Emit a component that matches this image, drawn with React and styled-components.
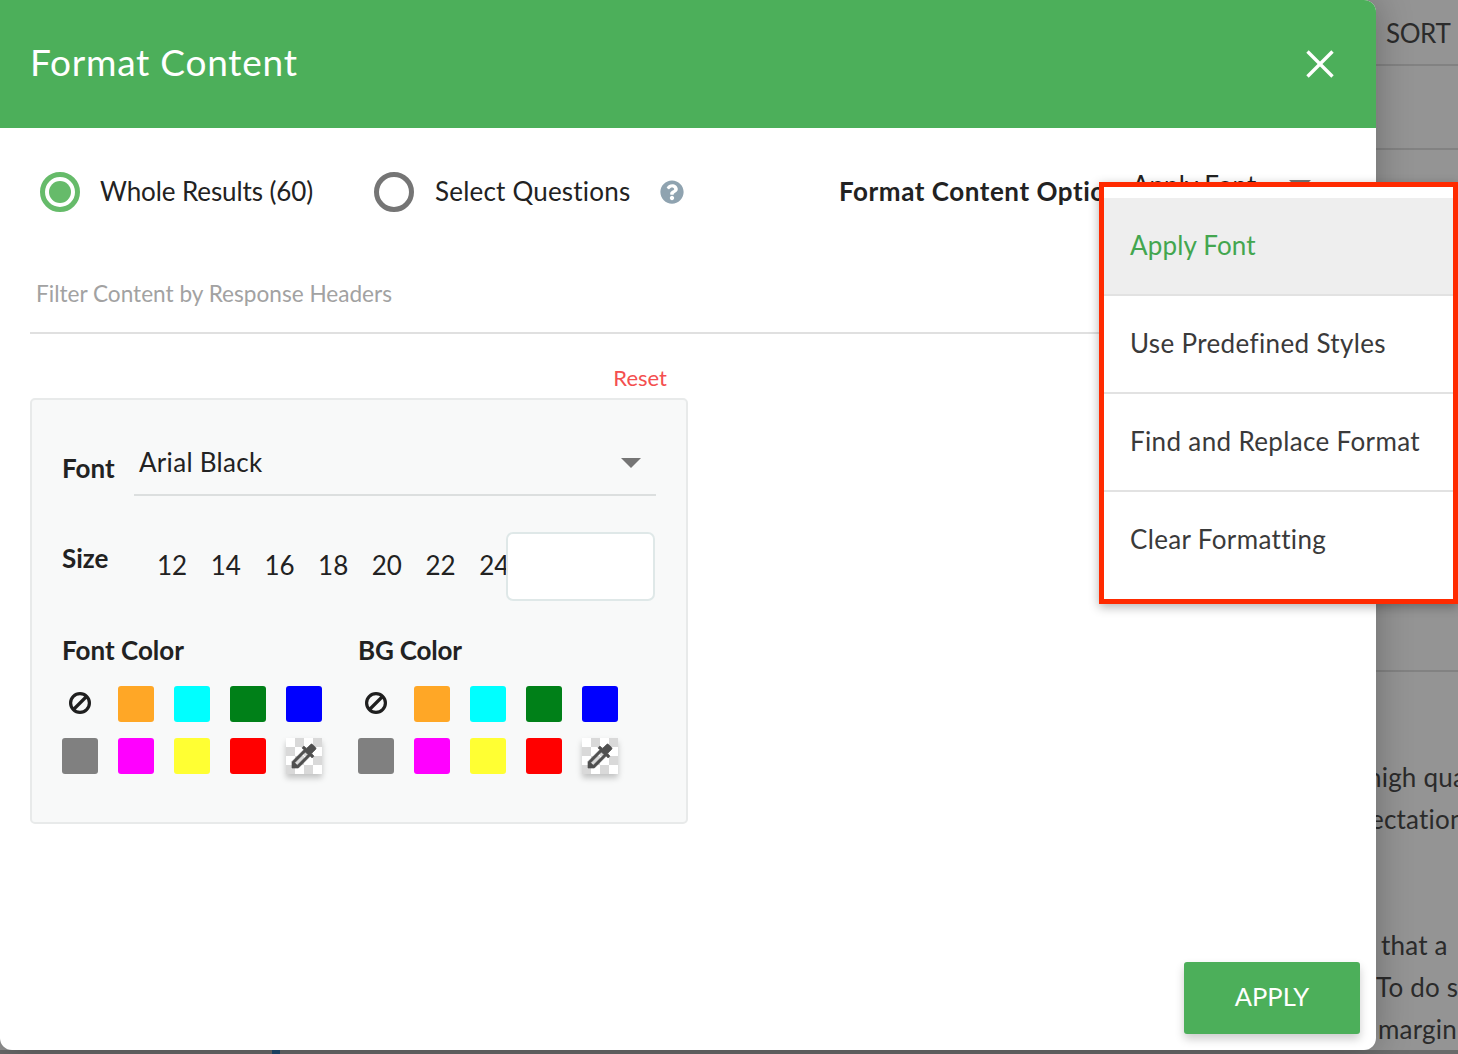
import React from "react";
import styled, { createGlobalStyle } from "styled-components";
import { FaQuestionCircle } from "react-icons/fa";

const Global = createGlobalStyle`
  html, body { margin: 0; padding: 0; width: 1458px; height: 1054px; overflow: hidden; background: #6a6a6a; }
  * { box-sizing: border-box; }
  body { font-family: Lato, "Noto Sans", sans-serif; color: #222; font-variant-ligatures: none; }
`;

const Stage = styled.div`
  position: relative;
  width: 1458px;
  height: 1054px;
  overflow: hidden;
`;
const Backdrop = styled.div`
  height: 1050px;
  background: #949494;
  padding-left: 1376px;
  display: flex;
  flex-direction: column;
  color: #2b2b2b;
  font-size: 26px;
  letter-spacing: 0.2px;
`;
const BottomStrip = styled.div`
  height: 4px;
  background: #6a6a6a;
  display: flex;
  padding-left: 272px;
`;
const BlueTick = styled.div`
  width: 8px;
  background: #1d4a6e;
`;
const BgHead = styled.div`
  height: 66px;
  padding: 17px 0 0 10px;
  border-bottom: 2px solid #828282;
  line-height: 32px;
  letter-spacing: -0.4px;
  white-space: nowrap;
`;
const BgRow = styled.div`
  height: ${p => p.$h}px;
  border-bottom: 2px solid #828282;
`;
const BgParagraph = styled.div`
  margin-top: ${p => p.$top}px;
  display: flex;
  flex-direction: column;
`;
const BgLine = styled.div`
  height: 42px;
  line-height: 42px;
  white-space: nowrap;
  margin-left: ${p => p.$indent}px;
`;

const Modal = styled.div`
  position: absolute;
  left: 0;
  top: 0;
  width: 1376px;
  height: 1050px;
  background: #fff;
  border-radius: 0 12px 12px 12px;
  box-shadow: 0 0 36px rgba(0, 0, 0, 0.28);
  display: flex;
  flex-direction: column;
  overflow: hidden;
`;
const Header = styled.header`
  height: 128px;
  flex: none;
  background: #4caf5a;
  display: flex;
  align-items: center;
  justify-content: space-between;
  padding: 0 42px 0 30px;
`;
const Title = styled.h1`
  margin: 0 0 6px;
  font-size: 37px;
  font-weight: 400;
  letter-spacing: 0.75px;
  color: #fff;
`;
const CloseIcon = styled.svg`
  width: 28px;
  height: 28px;
  display: block;
`;
const Body = styled.div`
  flex: 1;
  display: flex;
  flex-direction: column;
  padding: 44px 16px 16px 30px;
  min-height: 0;
`;
const OptionsRow = styled.div`
  height: 40px;
  display: flex;
  align-items: center;
  padding-left: 10px;
`;
const Radio = styled.span`
  width: 40px;
  height: 40px;
  flex: none;
  border-radius: 50%;
  border: 5px solid ${p => (p.$on ? "#66bb6a" : "#757575")};
  display: flex;
  align-items: center;
  justify-content: center;
  &::after {
    content: "";
    width: 22px;
    height: 22px;
    border-radius: 50%;
    background: ${p => (p.$on ? "#66bb6a" : "transparent")};
  }
`;
const RadioLabel = styled.span`
  font-size: 26px;
  margin: 0 0 2px ${p => p.$gap || 20}px;
  width: ${p => p.$w}px;
  flex: none;
  white-space: nowrap;
  letter-spacing: ${p => p.$track || 0}px;
`;
const Help = styled(FaQuestionCircle)`
  width: 24px;
  height: 24px;
  color: #8fa3b0;
  flex: none;
`;
const OptionTitle = styled.span`
  margin: 0 0 2px 155px;
  width: 293px;
  flex: none;
  font-size: 26px;
  font-weight: 700;
  letter-spacing: 0.55px;
  white-space: nowrap;
`;
const OptionValue = styled.span`
  width: 157px;
  flex: none;
  font-size: 26px;
  white-space: nowrap;
  margin-bottom: 14px;
`;
const MiniCaret = styled.span`
  width: 0;
  height: 0;
  margin-bottom: 13px;
  border-left: 11px solid transparent;
  border-right: 11px solid transparent;
  border-top: 11px solid #757575;
`;
const FilterField = styled.div`
  margin-top: 62px;
  height: 60px;
  padding: 5px 0 0 6px;
  border-bottom: 2px solid #e0e0e0;
  font-size: 22.6px;
  line-height: 30px;
  color: #a2a2a2;
`;
const ResetRow = styled.div`
  width: 658px;
  height: 64px;
  display: flex;
  justify-content: flex-end;
  align-items: flex-end;
  padding: 0 21px 5px 0;
`;
const ResetLink = styled.a`
  font-size: 22px;
  line-height: 30px;
  color: #f44f4f;
`;
const Panel = styled.section`
  width: 658px;
  height: 426px;
  background: #f8f9f9;
  border: 2px solid #e8eaea;
  border-radius: 5px;
  padding: 30px 30px 0;
  display: flex;
  flex-direction: column;
`;
const FontRow = styled.div`
  display: flex;
  align-items: flex-start;
  height: 68px;
`;
const BoldLabel = styled.span`
  font-size: 26px;
  font-weight: 700;
  line-height: 34px;
  white-space: nowrap;
`;
const FontLabel = styled(BoldLabel)`
  width: 72px;
  flex: none;
  margin-top: 21px;
`;
const SelectBox = styled.div`
  flex: 1;
  height: 66px;
  border-bottom: 2px solid #dcdfdf;
  display: flex;
  align-items: center;
  justify-content: space-between;
  padding: 0 15px 0 5px;
  font-size: 26px;
  letter-spacing: 0.3px;
`;
const Caret = styled.span`
  width: 0;
  height: 0;
  margin-top: 2px;
  border-left: 10px solid transparent;
  border-right: 10px solid transparent;
  border-top: 10px solid #757575;
`;
const SizeRow = styled.div`
  display: flex;
  align-items: center;
  height: 68px;
  margin-top: 34px;
`;
const SizeLabel = styled(BoldLabel)`
  width: 95px;
  flex: none;
  margin-bottom: 16px;
`;
const SizeOption = styled.span`
  width: 53.7px;
  flex: none;
  font-size: 26px;
  line-height: 32px;
  padding-bottom: 2px;
`;
const SizeInput = styled.div`
  margin-left: -27px;
  width: 149px;
  height: 69px;
  flex: none;
  background: #fff;
  border: 2px solid #dfe8e8;
  border-radius: 7px;
`;
const ColorColumns = styled.div`
  display: flex;
  margin-top: 33px;
`;
const ColorColumn = styled.div`
  width: 296px;
  flex: none;
`;
const ColorTitle = styled(BoldLabel)`
  display: block;
  letter-spacing: ${p => p.$track || 0}px;
`;
const SwatchGrid = styled.div`
  margin-top: 19px;
  display: grid;
  grid-template-columns: repeat(5, 36px);
  column-gap: 20px;
  row-gap: 16px;
`;
const Swatch = styled.span`
  width: 36px;
  height: 36px;
  border-radius: 3px;
  background: ${p => p.$c};
`;
const NoColor = styled.span`
  width: 36px;
  height: 36px;
  display: flex;
  align-items: center;
  justify-content: center;
`;
const NoColorIcon = styled.svg`
  width: 24px;
  height: 24px;
  margin-top: -2px;
`;
const Picker = styled.span`
  width: 36px;
  height: 36px;
  display: flex;
  align-items: center;
  justify-content: center;
  background: repeating-conic-gradient(#d9d9d9 0 25%, #fff 0 50%) 0 0 / 18px 18px;
  box-shadow: 0 4px 6px rgba(0, 0, 0, 0.22);
`;
const PickerIcon = styled.svg`
  width: 32px;
  height: 32px;
  flex: none;
  fill: #4f4f4f;
  stroke: #4f4f4f;
  stroke-width: 0.5;
`;
const Footer = styled.div`
  margin-top: auto;
  display: flex;
  justify-content: flex-end;
`;
const ApplyButton = styled.button`
  width: 176px;
  height: 72px;
  border: 0;
  border-radius: 3px;
  padding: 0 0 4px;
  background: #4caf5a;
  color: #fff;
  font-family: inherit;
  font-size: 25.5px;
  box-shadow: 0 5px 10px rgba(0, 0, 0, 0.2);
`;

const Menu = styled.div`
  position: absolute;
  left: 1099px;
  top: 182px;
  width: 359px;
  height: 422px;
  background: #fff;
  border: 5px solid #ff2a00;
  padding-top: 11px;
  box-shadow: 0 3px 10px rgba(0, 0, 0, 0.3);
  display: flex;
  flex-direction: column;
`;
const MenuItem = styled.div`
  height: 98px;
  flex: none;
  padding: 0 0 ${p => (p.$last ? 4 : 3)}px 26px;
  display: flex;
  align-items: center;
  font-size: 26px;
  letter-spacing: ${p => (p.$active ? 0.15 : 0.35)}px;
  white-space: nowrap;
  color: ${p => (p.$active ? "#43a64f" : "#3a3a3a")};
  background: ${p => (p.$active ? "#eeeeee" : "transparent")};
  border-bottom: ${p => (p.$last ? "0" : "2px solid #e2e2e2")};
`;

const colors = ["#ffa726", "#00ffff", "#008018", "#0000ff", "#808080", "#ff00ff", "#ffff33", "#ff0000"];
const sizes = [12, 14, 16, 18, 20, 22, 24];
const menu = ["Apply Font", "Use Predefined Styles", "Find and Replace Format", "Clear Formatting"];

function Swatches() {
  return (
    <SwatchGrid>
      <NoColor>
        <NoColorIcon viewBox="0 0 24 24" fill="none" stroke="#1f1f1f" strokeWidth="3.2">
          <circle cx="12" cy="12" r="9.4" />
          <line x1="5.5" y1="18.5" x2="18.5" y2="5.5" />
        </NoColorIcon>
      </NoColor>
      {colors.map(c => <Swatch key={c} $c={c} />)}
      <Picker>
        <PickerIcon viewBox="0 0 24 24">
          <path d="M20.71 5.63l-2.34-2.34c-.39-.39-1.02-.39-1.41 0l-3.12 3.12-1.93-1.91-1.41 1.41 1.42 1.42L3 16.25V21h4.75l8.92-8.92 1.42 1.42 1.41-1.41-1.92-1.92 3.12-3.12c.4-.4.4-1.03.01-1.42zM6.92 19L5 17.08l8.06-8.06 1.92 1.92L6.92 19z" />
        </PickerIcon>
      </Picker>
    </SwatchGrid>
  );
}

export default function App() {
  return (
    <Stage>
      <Global />
      <Backdrop>
        <BgHead>SORT</BgHead>
        <BgRow $h={84} />
        <BgRow $h={522} />
        <BgParagraph $top={84}>
          <BgLine $indent={-9}>high quality</BgLine>
          <BgLine $indent={-6}>ectations</BgLine>
        </BgParagraph>
        <BgParagraph $top={84}>
          <BgLine $indent={5}>that a</BgLine>
          <BgLine $indent={0}>To do so</BgLine>
          <BgLine $indent={2}>margin</BgLine>
        </BgParagraph>
      </Backdrop>
      <BottomStrip><BlueTick /></BottomStrip>

      <Modal>
        <Header>
          <Title>Format Content</Title>
          <CloseIcon viewBox="0 0 28 28" stroke="#fff" strokeWidth="3.4" fill="none">
            <line x1="1.5" y1="1.5" x2="26.5" y2="26.5" />
            <line x1="26.5" y1="1.5" x2="1.5" y2="26.5" />
          </CloseIcon>
        </Header>
        <Body>
          <OptionsRow>
            <Radio $on />
            <RadioLabel $w={274} $track={-0.1}>Whole Results (60)</RadioLabel>
            <Radio />
            <RadioLabel $w={225} $gap={21} $track={0.2}>Select Questions</RadioLabel>
            <Help />
            <OptionTitle>Format Content Options</OptionTitle>
            <OptionValue>Apply Font</OptionValue>
            <MiniCaret />
          </OptionsRow>
          <FilterField>Filter Content by Response Headers</FilterField>
          <ResetRow><ResetLink>Reset</ResetLink></ResetRow>
          <Panel>
            <FontRow>
              <FontLabel>Font</FontLabel>
              <SelectBox>
                <span>Arial Black</span>
                <Caret />
              </SelectBox>
            </FontRow>
            <SizeRow>
              <SizeLabel>Size</SizeLabel>
              {sizes.map(s => <SizeOption key={s}>{s}</SizeOption>)}
              <SizeInput />
            </SizeRow>
            <ColorColumns>
              <ColorColumn>
                <ColorTitle>Font Color</ColorTitle>
                <Swatches />
              </ColorColumn>
              <ColorColumn>
                <ColorTitle $track={-0.2}>BG Color</ColorTitle>
                <Swatches />
              </ColorColumn>
            </ColorColumns>
          </Panel>
          <Footer><ApplyButton>APPLY</ApplyButton></Footer>
        </Body>
      </Modal>

      <Menu>
        {menu.map((m, i) => (
          <MenuItem key={m} $active={i === 0} $last={i === menu.length - 1}>{m}</MenuItem>
        ))}
      </Menu>
    </Stage>
  );
}
